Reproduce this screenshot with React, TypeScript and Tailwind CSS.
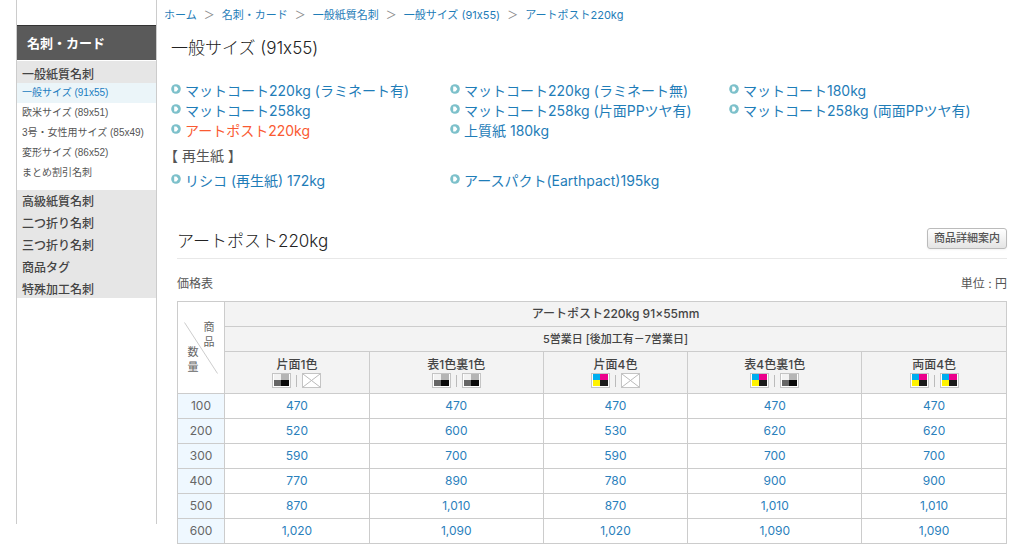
import React from 'react';

interface Column {
  label: string;
  front: 'mono' | 'color';
  back: 'mono' | 'color' | 'none';
}

const crumbs = ['ホーム', '名刺・カード', '一般紙質名刺', '一般サイズ (91x55)', 'アートポスト220kg'];

const sizes = [
  '一般サイズ (91x55)',
  '欧米サイズ (89x51)',
  '3号・女性用サイズ (85x49)',
  '変形サイズ (86x52)',
  'まとめ割引名刺',
];

const categories = ['高級紙質名刺', '二つ折り名刺', '三つ折り名刺', '商品タグ', '特殊加工名刺'];

const papers = [
  'マットコート220kg (ラミネート有)',
  'マットコート220kg (ラミネート無)',
  'マットコート180kg',
  'マットコート258kg',
  'マットコート258kg (片面PPツヤ有)',
  'マットコート258kg (両面PPツヤ有)',
  'アートポスト220kg',
  '上質紙 180kg',
];

const recycledPapers = ['リシコ (再生紙) 172kg', 'アースパクト(Earthpact)195kg'];

const columns: Column[] = [
  { label: '片面1色', front: 'mono', back: 'none' },
  { label: '表1色裏1色', front: 'mono', back: 'mono' },
  { label: '片面4色', front: 'color', back: 'none' },
  { label: '表4色裏1色', front: 'color', back: 'mono' },
  { label: '両面4色', front: 'color', back: 'color' },
];

const prices = [
  { qty: 100, values: [470, 470, 470, 470, 470] },
  { qty: 200, values: [520, 600, 530, 620, 620] },
  { qty: 300, values: [590, 700, 590, 700, 700] },
  { qty: 400, values: [770, 890, 780, 900, 900] },
  { qty: 500, values: [870, 1010, 870, 1010, 1010] },
  { qty: 600, values: [1020, 1090, 1020, 1090, 1090] },
];

const PlayDot = () => (
  <svg className="mt-[3px] size-[10px] shrink-0" viewBox="0 0 10 10" aria-hidden="true">
    <circle cx="5" cy="5" r="4.8" fill="#7cc0ca" />
    <path d="M3.2 2.4h2.2L7.4 5 5.4 7.6H3.2z" fill="#fff" />
  </svg>
);

const inks = {
  mono: ['#f2f2f2', '#b5b5b5', '#666', '#0a0a0a'],
  color: ['#00aeef', '#ec008c', '#fff200', '#1a1a1a'],
};

const Swatch: React.FC<{ kind: 'mono' | 'color' | 'none' }> = ({ kind }) => (
  <svg className="h-[15px] w-[19px]" viewBox="0 0 19 15" aria-hidden="true">
    <rect x="0.5" y="0.5" width="18" height="14" fill="#fff" stroke="#c4c4c4" />
    {kind === 'none' ? (
      <path d="M1 1l17 13M18 1L1 14" stroke="#bbb" fill="none" />
    ) : (
      <>
        <rect x="2" y="1" width="8" height="7" fill={inks[kind][0]} />
        <rect x="9" y="1" width="8" height="7" fill={inks[kind][1]} />
        <rect x="2" y="7" width="8" height="6" fill={inks[kind][2]} />
        <rect x="9" y="7" width="8" height="6" fill={inks[kind][3]} />
      </>
    )}
  </svg>
);

const PaperList: React.FC<{ items: string[]; current?: string }> = ({ items, current }) => (
  <ul className="grid grid-cols-3 pl-[7px] text-[14px] leading-5">
    {items.map((item) => (
      <li key={item} className="flex gap-1 whitespace-nowrap">
        <PlayDot />
        <a href="#" className={item === current ? 'text-[#fa5a32]' : 'text-[#1f7db8]'}>
          {item}
        </a>
      </li>
    ))}
  </ul>
);

const Sidebar = () => (
  <aside className="h-[524px] w-[141px] shrink-0 border-x border-[#ccc] pt-[25px] text-[#444]">
    <h2 className="border-t border-[#333] bg-[#5a5a5a] pl-[10px] text-[13px] leading-[34px] font-bold text-white">
      名刺・カード
    </h2>
    <h3 className="mt-px bg-[#e6e6e6] pt-[6px] pl-[5px] text-[12px] leading-4 font-medium">一般紙質名刺</h3>
    <ul className="font-['Liberation_Sans','Noto_Sans_CJK_JP',sans-serif] text-[10px] leading-5 whitespace-nowrap">
      {sizes.map((size, i) => (
        <li key={size} className={i === 0 ? 'bg-[#ebf5f9] pl-[5px]' : 'pl-[5px]'}>
          <a href="#" className={i === 0 ? 'text-[#1a7cc0]' : 'text-[#555]'}>
            {size}
          </a>
        </li>
      ))}
    </ul>
    <ul className="mt-[7px] flex flex-col gap-[6px] bg-[#e6e6e6] pt-1 pl-[5px] text-[12px] leading-4 font-medium">
      {categories.map((name) => (
        <li key={name}>
          <a href="#">{name}</a>
        </li>
      ))}
    </ul>
  </aside>
);

const PriceTable = () => (
  <table className="mt-2 w-full table-fixed border-collapse text-center text-[12px]">
    <colgroup>
      <col className="w-[47px]" />
      <col className="w-[17.5%]" />
      <col className="w-[21%]" />
      <col className="w-[17.5%]" />
      <col className="w-[21%]" />
      <col className="w-[17.5%]" />
    </colgroup>
    <thead className="text-[#444]">
      <tr className="h-[25px]">
        <th rowSpan={3} className="relative border border-[#ccc] font-normal text-[#666]">
          <svg className="absolute top-5 left-[6px] h-[52px] w-[34px]" viewBox="0 0 34 52" aria-hidden="true">
            <path d="M0.5 0.5l33 51" stroke="#ccc" />
          </svg>
          <div className="relative flex justify-center gap-[5px] text-[11px] leading-[15px]">
            <span className="mt-[25px] w-[11px]">数量</span>
            <span className="mb-[25px] w-[11px]">商品</span>
          </div>
        </th>
        <th colSpan={5} className="border border-[#ccc] bg-[#f3f3f3] font-medium">アートポスト220kg 91×55mm</th>
      </tr>
      <tr className="h-[25px]">
        <th colSpan={5} className="border border-[#ccc] bg-[#f3f3f3] text-[11px] font-medium">
          5営業日 [後加工有－7営業日]
        </th>
      </tr>
      <tr className="h-[42px]">
        {columns.map((col) => (
          <th key={col.label} className="border border-[#ccc] bg-[#f3f3f3] font-medium">
            <div className="leading-4">{col.label}</div>
            <div className="flex items-center justify-center gap-1">
              <Swatch kind={col.front} />
              <span className="mx-px h-3 w-px bg-[#bbb]" />
              <Swatch kind={col.back} />
            </div>
          </th>
        ))}
      </tr>
    </thead>
    <tbody>
      {prices.map((row) => (
        <tr key={row.qty} className="h-[25px]">
          <th className="border border-[#ccc] bg-[#eff8ff] font-normal text-[#666]">{row.qty}</th>
          {row.values.map((value, i) => (
            <td key={i} className="border border-[#ccc]">
              <a href="#" className="text-[#2a80bc]">{value.toLocaleString('en-US')}</a>
            </td>
          ))}
        </tr>
      ))}
    </tbody>
  </table>
);

const App: React.FC = () => {
  return (
    <div className="flex bg-white pr-4 pl-4 font-['Inter','Noto_Sans_CJK_JP',sans-serif] text-[#555]">
      <Sidebar />
      <main className="min-w-0 flex-1 pl-[7px]">
        <nav className="flex pt-[7px] text-[11px] leading-4 whitespace-nowrap">
          {crumbs.map((crumb, i) => (
            <React.Fragment key={crumb}>
              {i > 0 && <span className="mx-[7px] text-[#888]">＞</span>}
              <a href="#" className="text-[#1f7db8]">{crumb}</a>
            </React.Fragment>
          ))}
        </nav>
        <h1 className="mt-[13px] pl-[7px] text-[17px] leading-6 font-light text-[#222]">一般サイズ (91x55)</h1>
        <div className="mt-[21px]">
          <PaperList items={papers} current="アートポスト220kg" />
        </div>
        <p className="mt-[3px] text-[14px] leading-6">【 再生紙 】</p>
        <div className="mt-[3px]">
          <PaperList items={recycledPapers} />
        </div>
        <section className="mt-8 pr-px pl-[13px]">
          <div className="flex items-start justify-between border-b border-[#e8e8e8] pb-[5px]">
            <h2 className="mt-[6px] text-[17px] leading-6 font-light text-[#222]">アートポスト220kg</h2>
            <button
              type="button"
              className="mt-[5px] rounded-[3px] border border-[#bbb] bg-linear-to-b from-white to-[#e4e4e4] px-[6px] text-[11px] leading-[19px] font-medium shadow-xs"
            >
              商品詳細案内
            </button>
          </div>
          <div className="mt-4 flex justify-between text-[12px] leading-[18px]">
            <span>価格表</span>
            <span>単位 : 円</span>
          </div>
          <PriceTable />
        </section>
      </main>
    </div>
  );
};

export default App;
